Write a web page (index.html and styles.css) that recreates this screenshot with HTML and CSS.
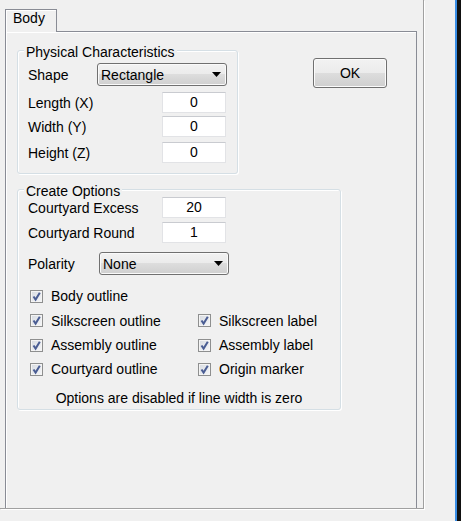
FILE: index.html
```html
<!doctype html>
<html><head>
  <meta charset="utf-8">
  <title>Body</title>
  <link rel="stylesheet" href="styles.css">
</head><body>
<div class="screen">
  <div class="frame">
    <div class="tabs">
      <div class="tab">Body</div>
    </div>
    <div class="page">
      <div class="top-row">
        <div class="group physical">
          <span class="group-title">Physical Characteristics</span>
          <div class="row shape-row">
            <span class="label">Shape</span>
            <div class="combo">Rectangle<svg class="arrow" width="9" height="5" viewBox="0 0 9 5"><polygon points="0,0 9,0 4.5,5" fill="#000"/></svg></div>
          </div>
          <div class="row len-row">
            <span class="label">Length (X)</span>
            <div class="field">0</div>
          </div>
          <div class="row wid-row">
            <span class="label">Width (Y)</span>
            <div class="field">0</div>
          </div>
          <div class="row hei-row">
            <span class="label">Height (Z)</span>
            <div class="field">0</div>
          </div>
        </div>
        <button class="btn ok">OK</button>
      </div>

      <div class="group options">
        <span class="group-title">Create Options</span>
        <div class="row">
          <span class="label">Courtyard Excess</span>
          <div class="field">20</div>
        </div>
        <div class="row round-row">
          <span class="label">Courtyard Round</span>
          <div class="field">1</div>
        </div>
        <div class="row polarity-row">
          <span class="label">Polarity</span>
          <div class="combo">None<svg class="arrow" width="9" height="5" viewBox="0 0 9 5"><polygon points="0,0 9,0 4.5,5" fill="#000"/></svg></div>
        </div>
        <div class="checks">
          <label class="check"><span class="box"><svg width="11" height="11" viewBox="0 0 11 11"><path d="M2.5 5.5 L4.6 8.6 L8.8 1.8" fill="none" stroke="#4a5d93" stroke-width="2"/></svg></span>Body outline</label>
          <span></span>
          <label class="check"><span class="box"><svg width="11" height="11" viewBox="0 0 11 11"><path d="M2.5 5.5 L4.6 8.6 L8.8 1.8" fill="none" stroke="#4a5d93" stroke-width="2"/></svg></span>Silkscreen outline</label>
          <label class="check"><span class="box"><svg width="11" height="11" viewBox="0 0 11 11"><path d="M2.5 5.5 L4.6 8.6 L8.8 1.8" fill="none" stroke="#4a5d93" stroke-width="2"/></svg></span>Silkscreen label</label>
          <label class="check"><span class="box"><svg width="11" height="11" viewBox="0 0 11 11"><path d="M2.5 5.5 L4.6 8.6 L8.8 1.8" fill="none" stroke="#4a5d93" stroke-width="2"/></svg></span>Assembly outline</label>
          <label class="check"><span class="box"><svg width="11" height="11" viewBox="0 0 11 11"><path d="M2.5 5.5 L4.6 8.6 L8.8 1.8" fill="none" stroke="#4a5d93" stroke-width="2"/></svg></span>Assembly label</label>
          <label class="check"><span class="box"><svg width="11" height="11" viewBox="0 0 11 11"><path d="M2.5 5.5 L4.6 8.6 L8.8 1.8" fill="none" stroke="#4a5d93" stroke-width="2"/></svg></span>Courtyard outline</label>
          <label class="check"><span class="box"><svg width="11" height="11" viewBox="0 0 11 11"><path d="M2.5 5.5 L4.6 8.6 L8.8 1.8" fill="none" stroke="#4a5d93" stroke-width="2"/></svg></span>Origin marker</label>
        </div>
        <p class="note">Options are disabled if line width is zero</p>
      </div>
    </div>
  </div>
  <div class="side"></div>
  <div class="edge"></div>
</div>
</body></html>
```

FILE: styles.css
```css
html, body {
    margin: 0;
    background: #f0f0f0;
}

body {
    font: 14px/16px 'Liberation Sans', Arial, sans-serif;
    color: #000;
    overflow: hidden;
}

.screen {
    display: flex;
    width: 461px;
    height: 521px;
}

/* outer frame with the tab control */
.frame {
    box-sizing: border-box;
    width: 424px;
    height: 509px;
    padding: 9px 0 0 5px;
    border-right: 1px solid #a0a0a0;
    border-bottom: 1px solid #a0a0a0;
    box-shadow: 1px 1px 0 #fff;
    display: flex;
    flex-direction: column;
}

.tabs {
    display: flex;
    height: 22px;
}

.tab {
    position: relative;
    z-index: 1;
    box-sizing: border-box;
    width: 52px;
    height: 23px;
    padding: 0 0 0 7px;
    background: #f0f0f0;
    border: 1px solid #898c95;
    border-bottom: 0;
    box-shadow: inset 1px 1px 0 #fff;
}

.page {
    flex: 1;
    box-sizing: border-box;
    width: 412px;
    padding: 18px 0 0 11px;
    border: 1px solid #898c95;
    border-bottom: 0;
    box-shadow: inset 1px 1px 0 #fff;
}

.top-row {
    display: flex;
    align-items: flex-start;
}

/* group boxes */
.group {
    position: relative;
    box-sizing: border-box;
    border: 1px solid #d5dfe5;
    border-radius: 3px;
    box-shadow: 1px 1px 0 #fff, inset 1px 1px 0 #fff;
}

.group-title {
    position: absolute;
    top: -7px;
    left: 6px;
    padding: 0 2px;
    background: #f0f0f0;
}

.physical {
    width: 221px;
    padding: 12px 10px 10px 10px;
}

.options {
    width: 324px;
    margin-top: 15px;
    padding: 7px 10px 3px 10px;
}

.row {
    display: flex;
    align-items: center;
}

.label {
    width: 134px;
    flex: none;
}

.shape-row .label { width: 69px; }
.len-row { margin-top: 6px; }
.wid-row { margin-top: 3px; }
.hei-row { margin-top: 5px; }
.round-row { margin-top: 4px; }
.polarity-row { margin-top: 9px; }
.polarity-row .label { width: 71px; }

.field {
    box-sizing: border-box;
    width: 64px;
    height: 21px;
    line-height: 19px;
    text-align: center;
    background: #fff;
    border: 1px solid #e2e3e6;
    border-top-color: #c9cbd0;
}

.combo {
    box-sizing: border-box;
    width: 130px;
    height: 23px;
    padding: 0 5px 0 3px;
    display: flex;
    align-items: center;
    justify-content: space-between;
    border: 1px solid #707070;
    border-radius: 3px;
    background: linear-gradient(#f2f2f2 0%, #ebebeb 50%, #dddddd 50%, #cfcfcf 100%);
    box-shadow: inset 0 0 0 1px #fafafa;
}

.btn {
    box-sizing: border-box;
    width: 74px;
    height: 30px;
    margin: 8px 0 0 75px;
    padding: 0;
    font: inherit;
    color: #000;
    border: 1px solid #707070;
    border-radius: 3px;
    background: linear-gradient(#f2f2f2 0%, #ebebeb 50%, #dddddd 50%, #cfcfcf 100%);
    box-shadow: inset 0 0 0 1px #fbfbfb;
}

/* check boxes */
.checks {
    display: grid;
    grid-template-columns: 168px auto;
    grid-template-rows: 24px 25px 24px 24px;
    margin-top: 9px;
}

.check {
    display: flex;
    align-items: center;
    gap: 8px;
}

.box {
    box-sizing: border-box;
    width: 13px;
    height: 13px;
    margin-left: 2px;
    border: 1px solid #8e8f8f;
    background: linear-gradient(135deg, #d6dae0, #f6f7f9);
    box-shadow: inset 0 0 0 1px #f4f4f4;
    display: flex;
}

.note {
    margin: 9px 0 0 0;
    text-align: center;
}

.side {
    flex: 1;
}

.edge {
    width: 4px;
    border-left: 2px solid #3a8ee6;
    background: #111;
}
```
